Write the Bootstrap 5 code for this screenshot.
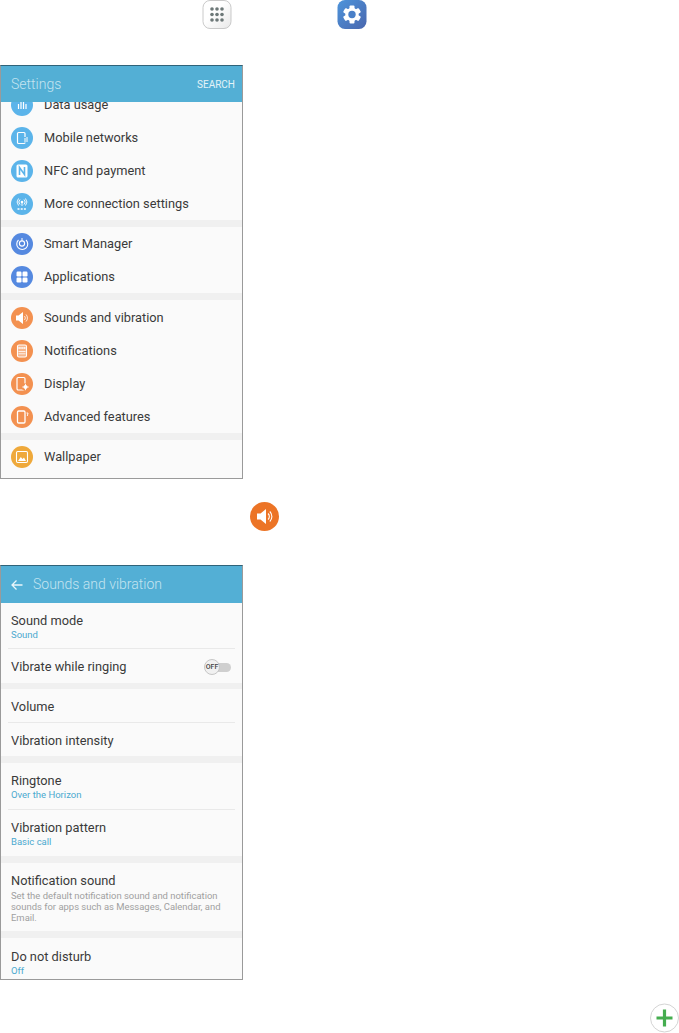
<!DOCTYPE html>
<html lang="en">
<head>
<meta charset="UTF-8">
<meta name="viewport" content="width=device-width, initial-scale=1.0">
<title>Sounds and vibration</title>
<link href="https://cdn.jsdelivr.net/npm/bootstrap@5.3.2/dist/css/bootstrap.min.css" rel="stylesheet">
<style>
body { background: #fff; font-family: Roboto, "Liberation Sans", sans-serif; color: #3a3a3a; }
svg { display: block; flex: none; }
.top-icons { height: 29px; }
.apps-key { width: 30px; height: 29px; margin-left: 202px; }
.gear-key { width: 30px; height: 29px; margin-left: 105px; }
.phone { width: 243px; background: #fafafa; border: 1px solid #9a9a9a; border-top: 1px solid #2f6379; }
.phone-list { height: 414px; margin-top: 36px; }
.phone-sound { height: 415px; margin-top: 34px; }
.phone-head { background: #53afd5; color: #c4e4f0; padding: 0 7px 0 10px; flex: none; height: 36px; }
.head-sound { height: 37px; }
.head-title { font-size: 14px; font-weight: 300; }
.head-search { font-size: 10px; color: #e4f3f8; }
.back-arrow { margin-right: 10px; }
.phone-body { overflow: hidden; min-height: 0; }
.set-row { height: 33px; padding-left: 10px; font-size: 12.8px; }
.set-row svg { margin-right: 11px; }
.first-row { margin-top: -14px; }
.peek-row { margin-top: -1px; }
.gap-band { height: 7px; background: #f0f0f0; }
.gap-thin { height: 6px; }
.gap-after { margin-bottom: 1px; }
.opt { padding: 2px 10px 0; font-size: 12.8px; line-height: 16px; }
.rule { border-bottom: 1px solid #e9e9e9; margin: 0 7px; }
.opt-sub { font-size: 9.5px; line-height: 12px; color: #4ba9cf; }
.opt-desc { font-size: 9.45px; line-height: 11px; color: #a0a0a0; margin-top: 1px; }
.h-45 { height: 45px; }
.h-35 { height: 34px; }
.h-33 { height: 33px; }
.h-46 { height: 46px; }
.h-68 { height: 68px; padding-top: 2px; }
.h-42 { height: 41px; padding-top: 8px; }
.toggle-wrap { position: relative; width: 27px; height: 16px; margin-right: 1px; }
.toggle-track { position: absolute; left: 8px; right: 0; top: 4px; height: 9px; border-radius: 5px; background: #cfcfcf; }
.toggle-knob { position: absolute; left: 0; top: 0; width: 16px; height: 16px; border-radius: 50%; background: #f1f1f1; border: 1px solid #c6c6c6; font-size: 7px; line-height: 14px; text-align: center; font-weight: 500; color: #444; }
.speaker-key { margin: 23px 0 0 250px; }
.plus-key { margin: 23px 0 0 650px; }
</style>
</head>
<body>

<div class="top-icons d-flex">
  <svg class="apps-key" viewBox="0 0 30 29">
    <defs><linearGradient id="appsFill" x1="0" y1="0" x2="1" y2="1"><stop offset=".4" stop-color="#fff"/><stop offset="1" stop-color="#e8e8e8"/></linearGradient></defs>
    <rect x="1" y="0.5" width="28" height="28" rx="7" fill="url(#appsFill)" stroke="#bcbcbc" stroke-width=".8"/>
    <g fill="#6d7878">
      <circle cx="10" cy="9" r="1.8"/><circle cx="15" cy="9" r="1.8"/><circle cx="20" cy="9" r="1.8"/>
      <circle cx="10" cy="14.5" r="1.8"/><circle cx="15" cy="14.5" r="1.8"/><circle cx="20" cy="14.5" r="1.8"/>
      <circle cx="10" cy="20" r="1.8"/><circle cx="15" cy="20" r="1.8"/><circle cx="20" cy="20" r="1.8"/>
    </g>
  </svg>
  <svg class="gear-key" viewBox="0 0 30 29">
    <defs><linearGradient id="gearFill" x1="0" y1="0" x2="1" y2="1"><stop offset="0" stop-color="#4d94db"/><stop offset="1" stop-color="#4a67ae"/></linearGradient></defs>
    <rect x="0.5" y="0" width="29" height="29" rx="7.5" fill="url(#gearFill)"/>
    <g fill="#fff">
      <rect x="12.5" y="5.5" width="5" height="18" rx="1"/>
      <rect x="12.5" y="5.5" width="5" height="18" rx="1" transform="rotate(60 15 14.5)"/>
      <rect x="12.5" y="5.5" width="5" height="18" rx="1" transform="rotate(120 15 14.5)"/>
    </g>
    <circle cx="15" cy="14.5" r="5.2" fill="none" stroke="#fff" stroke-width="3"/>
    <circle cx="15" cy="14.5" r="3.7" fill="#4a80c8"/>
  </svg>
</div>

<div class="phone phone-list d-flex flex-column">
  <div class="phone-head d-flex align-items-center justify-content-between">
    <span class="head-title">Settings</span>
    <span class="head-search">SEARCH</span>
  </div>
  <div class="phone-body flex-grow-1">
    <div class="set-row first-row d-flex align-items-center">
      <svg width="22" height="22" viewBox="0 0 22 22"><circle cx="11" cy="11" r="11" fill="#5bb4ea"/><path d="M7.5 10v5M10 8v7M12.5 8v7M15 10v5" stroke="#fff" stroke-width="1.2"/></svg>
      Data usage
    </div>
    <div class="set-row d-flex align-items-center">
      <svg width="22" height="22" viewBox="0 0 22 22"><circle cx="11" cy="11" r="11" fill="#5bb4ea"/><rect x="6.5" y="5.5" width="7.5" height="11" rx="1" fill="none" stroke="#fff" stroke-width="1.2"/><rect x="13" y="10" width="3.5" height="5.5" fill="#5bb4ea"/><path d="M14 11v4M16 10v5" stroke="#fff" stroke-width="1"/></svg>
      Mobile networks
    </div>
    <div class="set-row d-flex align-items-center">
      <svg width="22" height="22" viewBox="0 0 22 22"><circle cx="11" cy="11" r="11" fill="#5bb4ea"/><rect x="5.5" y="4.5" width="11" height="13" rx="1.5" fill="#fff"/><path d="M8.5 15V7.5l5 7V7" fill="none" stroke="#5bb4ea" stroke-width="1.6"/></svg>
      NFC and payment
    </div>
    <div class="set-row d-flex align-items-center">
      <svg width="22" height="22" viewBox="0 0 22 22"><circle cx="11" cy="11" r="11" fill="#5bb4ea"/><circle cx="11" cy="9" r="1.3" fill="#fff"/><path d="M11 9v4M9 6.5a3.5 3.5 0 0 0 0 5M13 6.5a3.5 3.5 0 0 1 0 5M7.500 5.500a5.500 5.500 0 0 0 0 7M14.500 5.500a5.500 5.500 0 0 1 0 7" fill="none" stroke="#fff" stroke-width=".9"/><path d="M6.500 16h9" stroke="#fff" stroke-width="1.400" stroke-dasharray="2 1.200"/></svg>
      More connection settings
    </div>
    <div class="gap-band"></div>
    <div class="set-row d-flex align-items-center">
      <svg width="22" height="22" viewBox="0 0 22 22"><circle cx="11" cy="11" r="11" fill="#5589e0"/><path d="M7.500 7a5.500 5.500 0 1 0 7.500 0" fill="none" stroke="#fff" stroke-width="1.100"/><circle cx="11" cy="10.500" r="2.600" fill="none" stroke="#fff" stroke-width="1.100"/><path d="M11 5v3" stroke="#fff" stroke-width="1"/></svg>
      Smart Manager
    </div>
    <div class="set-row d-flex align-items-center">
      <svg width="22" height="22" viewBox="0 0 22 22"><circle cx="11" cy="11" r="11" fill="#5589e0"/><g fill="#fff"><rect x="5.500" y="5.500" width="5" height="5" rx="1.200"/><rect x="11.500" y="5.500" width="5" height="5" rx="1.200"/><rect x="5.500" y="11.500" width="5" height="5" rx="1.200"/><rect x="11.500" y="11.500" width="5" height="5" rx="1.200"/></g></svg>
      Applications
    </div>
    <div class="gap-band gap-after"></div>
    <div class="set-row d-flex align-items-center">
      <svg width="22" height="22" viewBox="0 0 22 22"><circle cx="11" cy="11" r="11" fill="#f39150"/><path d="M5 8.500h2.500L12 5v12l-4.500-3.500H5z" fill="#fff"/><path d="M13.500 9a3 3 0 0 1 0 4M15 7.500a5 5 0 0 1 0 7" fill="none" stroke="#fff" stroke-width=".8"/></svg>
      Sounds and vibration
    </div>
    <div class="set-row d-flex align-items-center">
      <svg width="22" height="22" viewBox="0 0 22 22"><circle cx="11" cy="11" r="11" fill="#f39150"/><rect x="6.500" y="5" width="9" height="12" rx="1.500" fill="#fff" fill-opacity=".35" stroke="#fff" stroke-width="1.100"/><path d="M7.500 8h7" stroke="#fff" stroke-width="2" stroke-dasharray="1.200 .7"/><path d="M7.500 11.500h7M7.500 13.800h7" stroke="#fff" stroke-width=".8"/></svg>
      Notifications
    </div>
    <div class="set-row d-flex align-items-center">
      <svg width="22" height="22" viewBox="0 0 22 22"><circle cx="11" cy="11" r="11" fill="#f39150"/><rect x="6" y="4.500" width="8" height="12.500" rx="1.200" fill="none" stroke="#fff" stroke-width="1.200"/><circle cx="14.500" cy="14" r="3.800" fill="#f39150"/><circle cx="14.500" cy="14" r="2" fill="#fff"/><path d="M14.500 10.800v6.400M11.300 14h6.400" stroke="#fff" stroke-width=".9"/></svg>
      Display
    </div>
    <div class="set-row d-flex align-items-center">
      <svg width="22" height="22" viewBox="0 0 22 22"><circle cx="11" cy="11" r="11" fill="#f39150"/><rect x="6.500" y="5" width="7.500" height="12" rx="1.200" fill="none" stroke="#fff" stroke-width="1.300"/><path d="M15.500 7h1.500l-.7 3" fill="none" stroke="#fff" stroke-width=".9"/></svg>
      Advanced features
    </div>
    <div class="gap-band"></div>
    <div class="set-row d-flex align-items-center">
      <svg width="22" height="22" viewBox="0 0 22 22"><circle cx="11" cy="11" r="11" fill="#efa93b"/><rect x="5.500" y="5.500" width="11" height="11" rx="1.200" fill="none" stroke="#fff" stroke-width="1.100"/><path d="M7 15l2.800-4 1.700 2 1.500-1.500 2 3.500z" fill="#fff"/></svg>
      Wallpaper
    </div>
    <div class="set-row peek-row d-flex align-items-center">
      <svg width="22" height="22" viewBox="0 0 22 22"><circle cx="11" cy="11" r="11" fill="#ef9a3b"/></svg>
    </div>
  </div>
</div>

<svg class="speaker-key" width="29" height="29" viewBox="0 0 29 29">
  <circle cx="14.500" cy="14.500" r="14.500" fill="#ec7426"/>
  <path d="M7 11.500h3.500L16 7v15l-5.500-4.500H7z" fill="#fff"/>
  <path d="M18 11.500a4 4 0 0 1 0 6M19.800 9.500a7 7 0 0 1 0 10" fill="none" stroke="#fff" stroke-width="1.100"/>
</svg>

<div class="phone phone-sound d-flex flex-column">
  <div class="phone-head head-sound d-flex align-items-center">
    <svg class="back-arrow" width="12" height="12" viewBox="0 0 12 12"><path d="M11.500 6H1M5.500 1.500L1 6l4.500 4.500" fill="none" stroke="#eaf6fa" stroke-width="1.300"/></svg>
    <span class="head-title">Sounds and vibration</span>
  </div>
  <div class="phone-body flex-grow-1">
    <div class="opt h-45 d-flex flex-column justify-content-center">
      <div>Sound mode</div>
      <div class="opt-sub">Sound</div>
    </div>
    <div class="rule"></div>
    <div class="opt h-35 d-flex align-items-center justify-content-between">
      <span>Vibrate while ringing</span>
      <div class="toggle-wrap">
        <div class="toggle-track"></div>
        <div class="toggle-knob">OFF</div>
      </div>
    </div>
    <div class="gap-band gap-thin"></div>
    <div class="opt h-33 d-flex align-items-center">Volume</div>
    <div class="rule"></div>
    <div class="opt h-33 d-flex align-items-center">Vibration intensity</div>
    <div class="gap-band"></div>
    <div class="opt h-46 d-flex flex-column justify-content-center">
      <div>Ringtone</div>
      <div class="opt-sub">Over the Horizon</div>
    </div>
    <div class="rule"></div>
    <div class="opt h-46 d-flex flex-column justify-content-center">
      <div>Vibration pattern</div>
      <div class="opt-sub">Basic call</div>
    </div>
    <div class="gap-band"></div>
    <div class="opt h-68 d-flex flex-column justify-content-center">
      <div>Notification sound</div>
      <div class="opt-desc">Set the default notification sound and notification sounds for apps such as Messages, Calendar, and Email.</div>
    </div>
    <div class="gap-band"></div>
    <div class="opt h-42 d-flex flex-column justify-content-center">
      <div>Do not disturb</div>
      <div class="opt-sub">Off</div>
    </div>
  </div>
</div>

<svg class="plus-key" width="29" height="30" viewBox="0 0 29 30">
  <circle cx="14.500" cy="15" r="14" fill="#fff" stroke="#d4d4d4"/>
  <path d="M14.500 6.500v17M6.500 15h16" stroke="#45ad4f" stroke-width="3.200"/>
</svg>

<script src="https://cdn.jsdelivr.net/npm/bootstrap@5.3.2/dist/js/bootstrap.bundle.min.js"></script>
</body>
</html>
